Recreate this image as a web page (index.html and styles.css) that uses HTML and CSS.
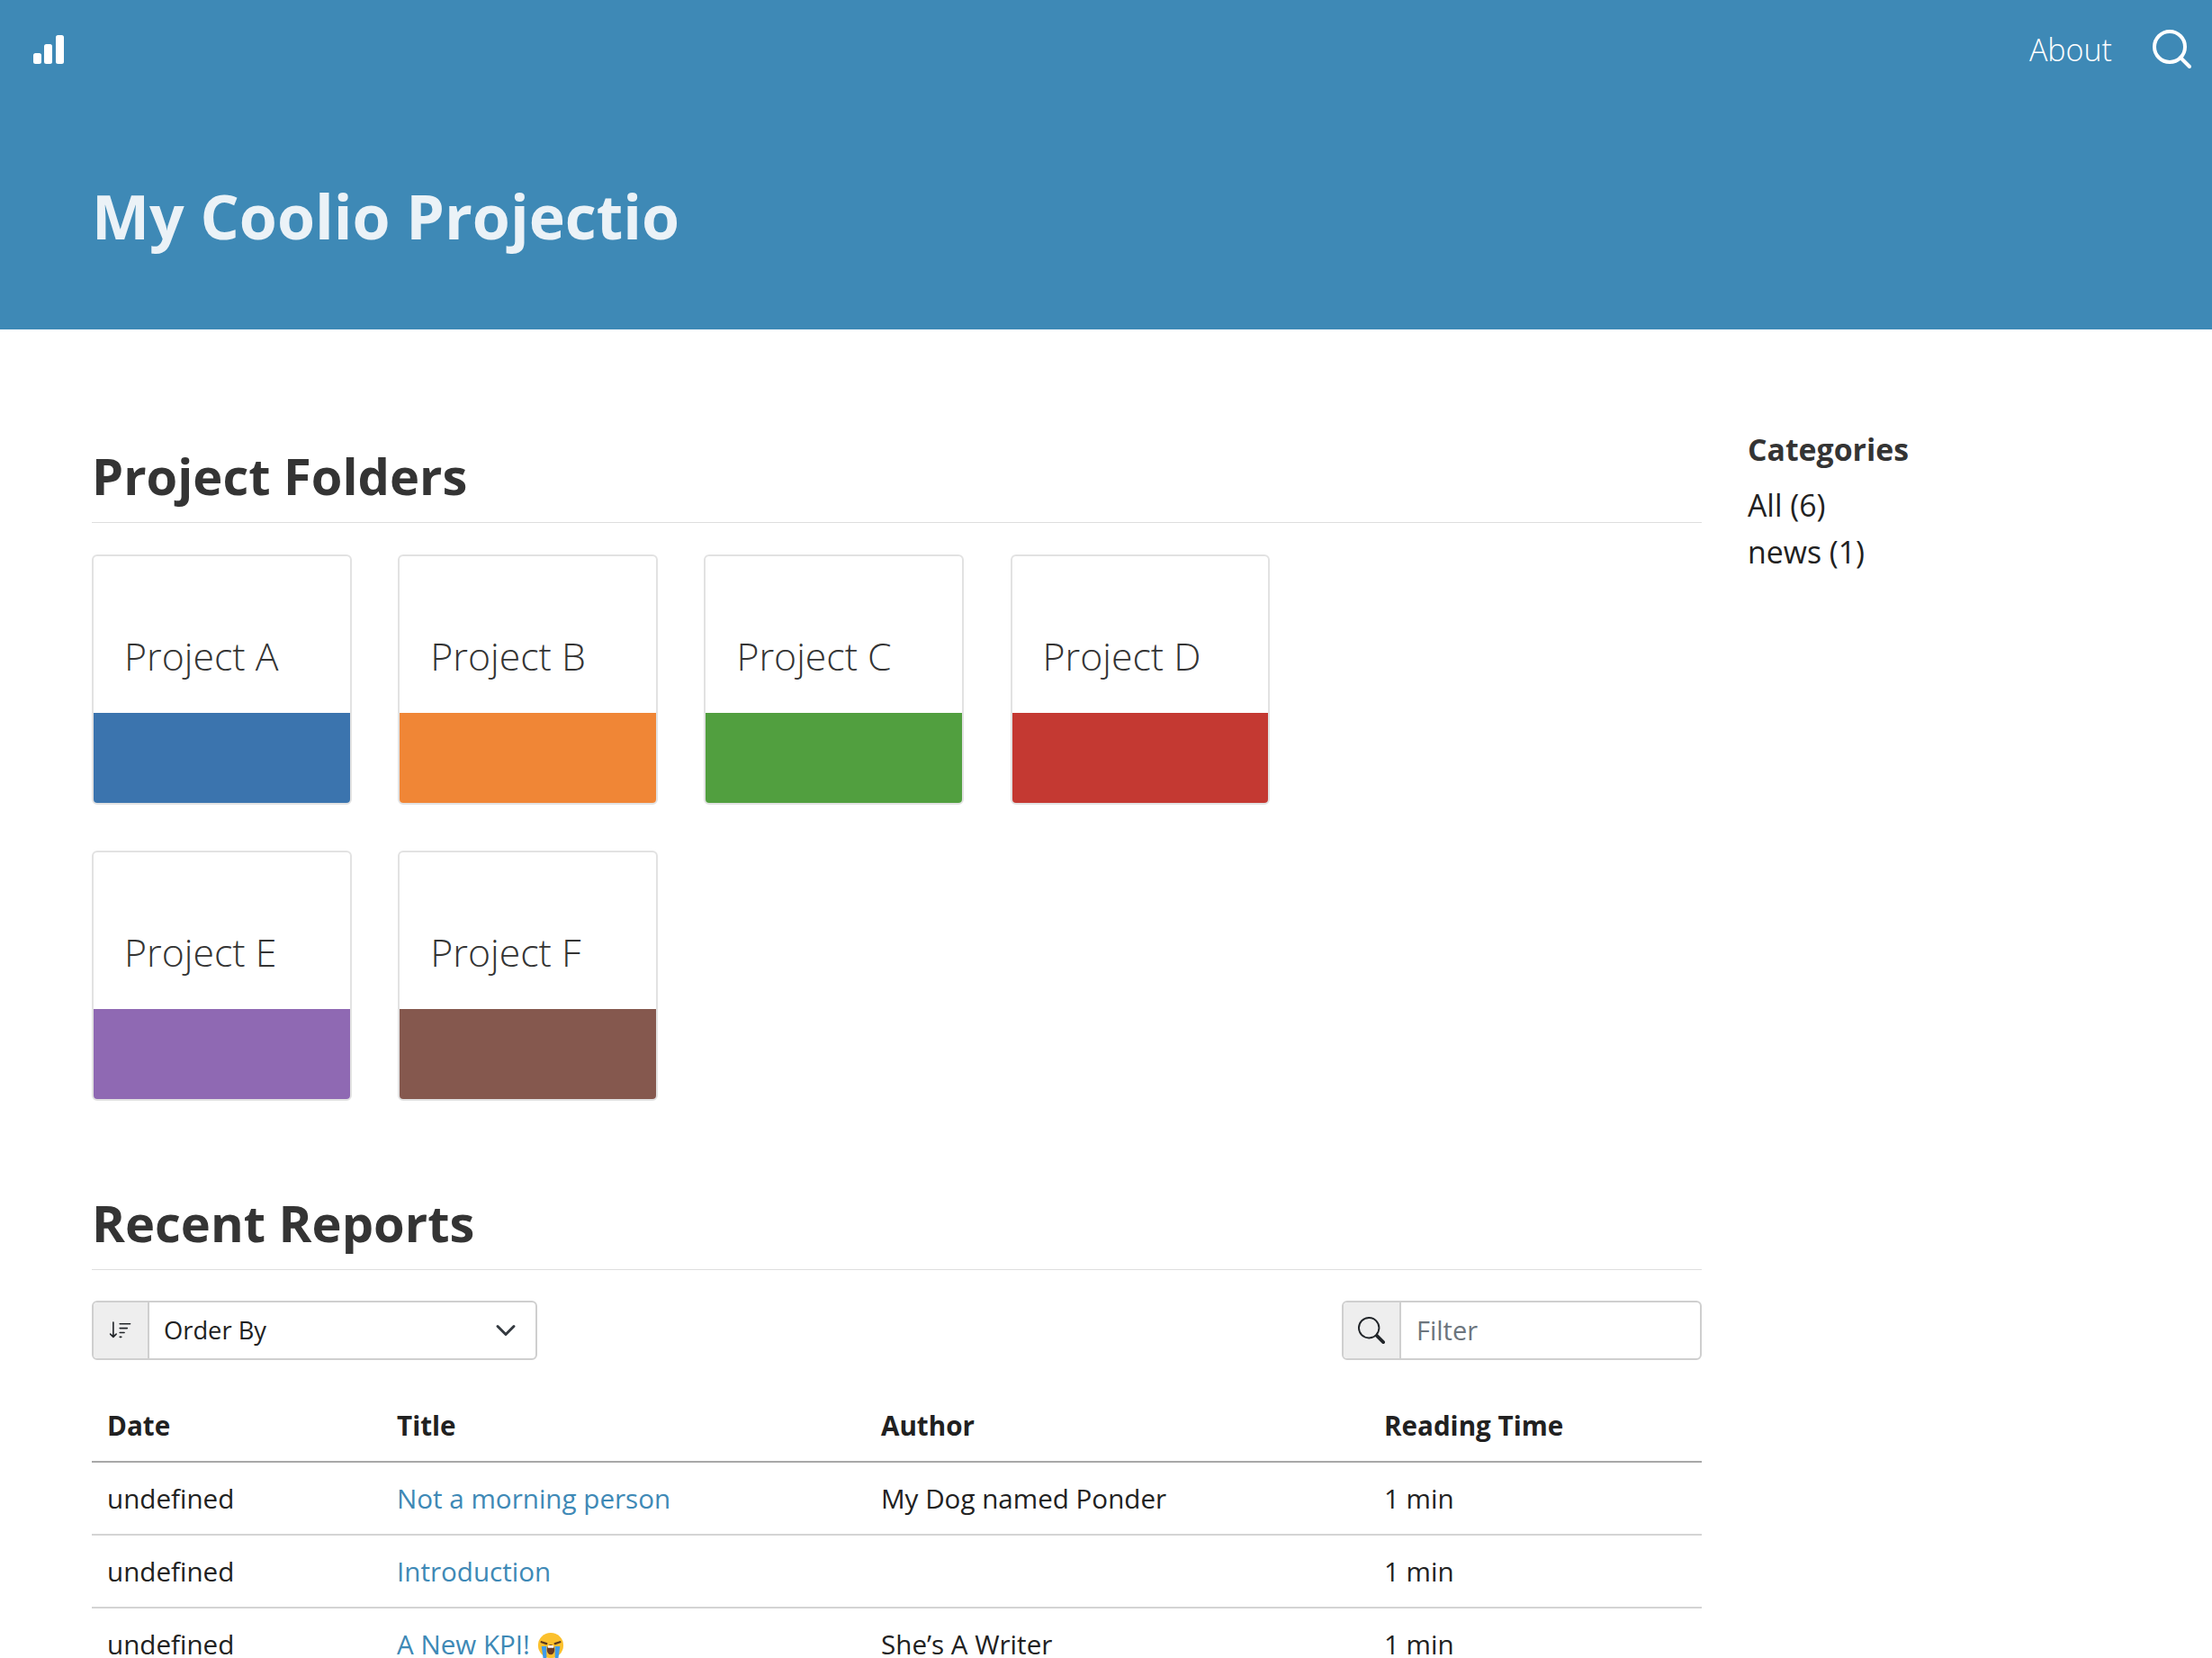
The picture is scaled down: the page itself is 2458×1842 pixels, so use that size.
FILE: index.html
```html
<!DOCTYPE html>
<html lang="en">
<head>
    <meta charset="UTF-8">
    <title>My Coolio Projectio</title>
    <link rel="stylesheet" href="styles.css">
</head>
<body>
    <header class="site-header">
        <nav class="topbar">
            <svg class="logo" viewBox="0 0 34 32" fill="#fff">
                <rect x="0" y="20" width="9" height="12" rx="2.5"/>
                <rect x="12" y="10" width="9" height="22" rx="2.5"/>
                <rect x="25" y="0" width="9" height="32" rx="2.5"/>
            </svg>
            <div class="topbar-right">
                <a class="about">About</a>
                <svg class="nav-search" viewBox="0 0 44 44" fill="none" stroke="#fff" stroke-width="4" stroke-linecap="round">
                    <circle cx="19" cy="19" r="17"/>
                    <path d="M31 31l10 10"/>
                </svg>
            </div>
        </nav>
        <h1>My Coolio Projectio</h1>
    </header>

    <div class="page">
        <main class="content">
            <h2 class="first">Project Folders</h2>
            <div class="folders">
                <a class="folder"><span class="folder-name">Project A</span><span class="swatch blue"></span></a>
                <a class="folder"><span class="folder-name">Project B</span><span class="swatch orange"></span></a>
                <a class="folder"><span class="folder-name">Project C</span><span class="swatch green"></span></a>
                <a class="folder"><span class="folder-name">Project D</span><span class="swatch red"></span></a>
                <a class="folder"><span class="folder-name">Project E</span><span class="swatch purple"></span></a>
                <a class="folder"><span class="folder-name">Project F</span><span class="swatch brown"></span></a>
            </div>

            <h2 class="second">Recent Reports</h2>
            <div class="controls">
                <div class="control order">
                    <span class="addon sort-addon">
                        <svg class="sort-icon" viewBox="0 0 16 16" fill="#212529"><path d="M3.5 2.5a.5.5 0 0 0-1 0v8.793l-1.146-1.147a.5.5 0 0 0-.708.708l2 1.999.007.007a.497.497 0 0 0 .7-.006l2-2a.5.5 0 0 0-.707-.708L3.5 11.293V2.5zm3.5 1a.5.5 0 0 1 .5-.5h7a.5.5 0 0 1 0 1h-7a.5.5 0 0 1-.5-.5zM7.5 6a.5.5 0 0 0 0 1h5a.5.5 0 0 0 0-1h-5zm0 3a.5.5 0 0 0 0 1h3a.5.5 0 0 0 0-1h-3zm0 3a.5.5 0 0 0 0 1h1a.5.5 0 0 0 0-1h-1z"/></svg>
                    </span>
                    <span class="order-label">Order By</span>
                    <svg class="chevron" viewBox="0 0 16 16" fill="none" stroke="#343a40" stroke-width="2" stroke-linecap="round" stroke-linejoin="round"><path d="M2 5l6 6 6-6"/></svg>
                </div>
                <div class="control filter">
                    <span class="addon search-addon">
                        <svg class="search-icon" viewBox="0 0 16 16" fill="#212529"><path d="M11.742 10.344a6.5 6.5 0 1 0-1.397 1.398h-.001c.03.04.062.078.098.115l3.85 3.85a1 1 0 0 0 1.415-1.414l-3.85-3.85a1.007 1.007 0 0 0-.115-.1zM12 6.5a5.5 5.5 0 1 1-11 0 5.5 5.5 0 0 1 11 0z"/></svg>
                    </span>
                    <input class="filter-input" type="text" placeholder="Filter">
                </div>
            </div>

            <table class="reports">
                <thead>
                    <tr><th class="col-date">Date</th><th class="col-title">Title</th><th class="col-author">Author</th><th>Reading Time</th></tr>
                </thead>
                <tbody>
                    <tr><td>undefined</td><td><a>Not a morning person</a></td><td>My Dog named Ponder</td><td>1 min</td></tr>
                    <tr><td>undefined</td><td><a>Introduction</a></td><td></td><td>1 min</td></tr>
                    <tr><td>undefined</td><td><a>A New KPI!</a> <svg class="emoji" viewBox="0 0 32 32">
                        <circle cx="16" cy="16" r="15" fill="#fbc02d"/>
                        <path d="M5 12l6 2M27 12l-6 2" stroke="#5b3a1e" stroke-width="2.4" stroke-linecap="round"/>
                        <path d="M5 17h6v14H7zM21 17h6l-2 14h-4z" fill="#3f9be8"/>
                        <ellipse cx="16" cy="21" rx="4.5" ry="6" fill="#6b3a1e"/>
                        <rect x="12.5" y="16" width="7" height="3" rx="1" fill="#fff"/>
                    </svg></td><td>She’s A Writer</td><td>1 min</td></tr>
                </tbody>
            </table>
        </main>

        <aside class="sidebar">
            <h5>Categories</h5>
            <div class="category">All (6)</div>
            <div class="category">news (1)</div>
        </aside>
    </div>
</body>
</html>
```

FILE: styles.css
```css
html, body {
    height: 100%;
    overflow: hidden;
}
body {
    margin: 0;
    font-family: "Open Sans", sans-serif;
    font-size: 29.6px;
    color: #212121;
    background: #fff;
}
.site-header {
    background: #3e89b6;
    height: 366px;
    box-sizing: border-box;
}
.topbar {
    display: flex;
    justify-content: space-between;
    align-items: center;
    padding: 32px 22px 0 37px;
}
.logo {
    width: 34px;
    height: 32px;
}
.topbar-right {
    display: flex;
    align-items: center;
    gap: 45px;
}
.about {
    color: #fff;
    font-size: 34px;
    font-weight: 300;
}
.nav-search {
    width: 44px;
    height: 44px;
}
h1 {
    margin: 121px 0 0 102px;
    color: #ebf2f7;
    font-size: 68px;
    font-weight: 700;
    line-height: 1.2;
}
.page {
    display: flex;
    padding: 0 0 0 102px;
}
.content {
    width: 1789px;
}
.sidebar {
    margin: 113px 0 0 51px;
}
h2 {
    margin: 0;
    color: #343434;
    font-size: 56px;
    font-weight: 700;
    line-height: 1.2;
    padding-bottom: 18px;
    border-bottom: 1px solid #dedede;
}
h2.first {
    margin-top: 129px;
}
h2.second {
    margin-top: 102px;
}
.folders {
    display: flex;
    flex-wrap: wrap;
    gap: 51px 51.7px;
    margin-top: 35px;
    width: 1400px;
}
.folder {
    display: flex;
    flex-direction: column;
    width: 288.5px;
    height: 278px;
    box-sizing: border-box;
    border: 2px solid #e2e2e2;
    border-radius: 6px;
    overflow: hidden;
}
.folder-name {
    flex: 1;
    padding: 85px 0 0 34px;
    color: #343434;
    font-size: 42.8px;
    font-weight: 300;
    line-height: 1.2;
}
.swatch {
    height: 100px;
}
.blue { background: #3b74ae; }
.orange { background: #f08636; }
.green { background: #519f3f; }
.red { background: #c43932; }
.purple { background: #8f69b3; }
.brown { background: #85584e; }
.controls {
    display: flex;
    justify-content: space-between;
    margin-top: 34px;
}
.control {
    display: flex;
    align-items: center;
    height: 66px;
    box-sizing: border-box;
    border: 2px solid #cfcfcf;
    border-radius: 6px;
    overflow: hidden;
    font-size: 27.3px;
}
.order {
    width: 495px;
}
.filter {
    width: 400px;
}
.addon {
    display: flex;
    align-items: center;
    justify-content: center;
    height: 100%;
    background: #eee;
    border-right: 2px solid #cfcfcf;
}
.sort-addon {
    width: 60px;
}
.search-addon {
    width: 62px;
}
.sort-icon {
    width: 26px;
    height: 26px;
}
.search-icon {
    width: 30px;
    height: 30px;
}
.order-label {
    flex: 1;
    padding-left: 16px;
    padding-bottom: 2px;
}
.chevron {
    width: 24px;
    height: 24px;
    margin-right: 21px;
}
.filter-input {
    flex: 1;
    min-width: 0;
    border: none;
    outline: none;
    padding: 0 17px 2px;
    font-family: inherit;
    font-size: 29px;
    color: #212121;
}
.filter-input::placeholder {
    color: #6c757d;
    opacity: 1;
}
.reports {
    width: 100%;
    margin-top: 34px;
    border-collapse: collapse;
    table-layout: fixed;
}
.reports th {
    text-align: left;
    font-weight: 700;
    padding: 18px 16px 19px 17px;
    border-bottom: 2px solid #a8a8a8;
}
.reports td {
    padding: 0 16px 0 17px;
    height: 79px;
    border-bottom: 2px solid #d4d4d4;
}
.reports th + th, .reports td + td {
    padding-left: 16px;
}
.col-date { width: 290px; }
.col-title { width: 506px; }
.col-author { width: 527px; }
.reports a {
    color: #3e89b6;
}
.emoji {
    width: 30px;
    height: 30px;
    vertical-align: -5px;
}
h5 {
    margin: 0 0 15px;
    color: #343434;
    font-size: 33.8px;
    font-weight: 700;
    line-height: 1.2;
}
.category {
    font-size: 33.8px;
    line-height: 52px;
}
```
